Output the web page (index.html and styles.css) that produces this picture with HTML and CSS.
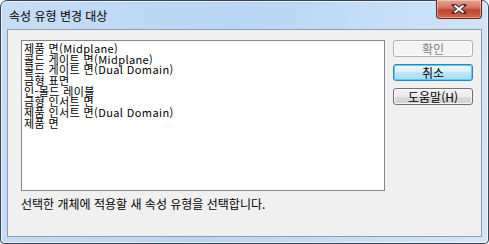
FILE: index.html
```html
<!DOCTYPE html>
<html lang="ko">
<head>
    <meta charset="UTF-8">
    <title>속성 유형 변경 대상</title>
    <link rel="stylesheet" href="styles.css">
</head>
<body>
<div class="window">
    <div class="titlebar">
        <span class="title">속성 유형 변경 대상</span>
        <button class="close-btn" type="button" aria-label="닫기">
            <svg width="16" height="10" viewBox="0 0 16 10">
                <path d="M3 1 L13 9 M13 1 L3 9" stroke="#4a2a2a" stroke-width="4" stroke-linecap="square"/>
                <path d="M3.5 1.5 L12.5 8.5 M12.5 1.5 L3.5 8.5" stroke="#ffffff" stroke-width="2"/>
            </svg>
        </button>
    </div>

    <div class="client">
        <!-- 속성 유형 목록 -->
        <ul class="type-list">
            <li>제품 면(Midplane)</li>
            <li>콜드 게이트 면(Midplane)</li>
            <li>콜드 게이트 면(Dual Domain)</li>
            <li>금형 표면</li>
            <li>인-몰드 레이블</li>
            <li>금형 인서트 면</li>
            <li>제품 인서트 면(Dual Domain)</li>
            <li>제품 면</li>
        </ul>

        <div class="actions">
            <button type="button" class="btn" disabled>확인</button>
            <button type="button" class="btn btn-default">취소</button>
            <button type="button" class="btn">도움말(H)</button>
        </div>

        <p class="hint">선택한 개체에 적용할 새 속성 유형을 선택합니다.</p>
    </div>
</div>
</body>
</html>
```

FILE: styles.css
```css
/* Windows 7 대화상자 스타일 */
:root {
    --face: #f0f0f0;
    --ui-font: "Noto Sans CJK KR", "Liberation Sans", sans-serif;
}

body {
    margin: 0;
    background: #ffffff;
    font-family: var(--ui-font);
}

.window {
    width: 489px;
    height: 244px;
    box-sizing: border-box;
    border: 1px solid #3a4656;
    border-radius: 7px 7px 4px 4px;
    background: linear-gradient(100deg, #c7def4 0%, #b8d5f3 45%, #d4e6f9 100%);
    box-shadow: inset 0 0 0 1px rgba(255, 255, 255, 0.6);
    padding: 0 6px 6px;
    display: flex;
    flex-direction: column;
}

.titlebar {
    height: 28px;
    display: flex;
    align-items: flex-start;
    justify-content: space-between;
}

.title {
    margin: 8px 0 0 2px;
    font-size: 12px;
    line-height: 14px;
    color: #000000;
}

.close-btn {
    width: 46px;
    height: 19px;
    margin: -1px 0 0 0;
    padding: 0;
    border: 1px solid #5a2b25;
    border-top: none;
    border-radius: 0 0 4px 4px;
    background: linear-gradient(#e8a493 0%, #d4705c 45%, #c0432b 55%, #d06a4f 100%);
    box-shadow: inset 0 0 0 1px rgba(255, 220, 210, 0.5);
    display: flex;
    justify-content: center;
    align-items: center;
}

.client {
    flex: 1;
    background: var(--face);
    border: 1px solid #8c9bae;
    display: grid;
    grid-template-columns: 364px 80px;
    grid-template-rows: 151px auto;
    column-gap: 8px;
    align-content: start;
    padding: 10px 8px 0 13px;
}

.type-list {
    margin: 0;
    padding: 2px 2px 0;
    list-style: none;
    background: #ffffff;
    border: 1px solid #828790;
    font-size: 11px;
    line-height: 10.7px;
    letter-spacing: 0.4px;
    color: #000000;
    overflow: hidden;
}

.type-list li {
    height: 10.7px;
    white-space: nowrap;
}

.actions {
    display: flex;
    flex-direction: column;
    gap: 7px;
}

.btn {
    height: 17px;
    padding: 0;
    border: 1px solid #707070;
    border-radius: 3px;
    background: linear-gradient(#f2f2f2 0%, #ebebeb 50%, #dddddd 50%, #cfcfcf 100%);
    box-shadow: inset 0 0 0 1px rgba(255, 255, 255, 0.8);
    font-family: var(--ui-font);
    font-size: 12px;
    line-height: 14px;
    color: #000000;
}

.btn:disabled {
    border-color: #adb2b5;
    background: #f4f4f4;
    color: #838383;
}

.btn-default {
    border-color: #3c7fb1;
    background: linear-gradient(#eaf6fd 0%, #d9f0fc 50%, #bee6fd 50%, #a7d9f5 100%);
    box-shadow: inset 0 0 0 1px #48d4fd;
}

.hint {
    grid-column: 1 / -1;
    margin: 6px 0 0;
    font-size: 12px;
    line-height: 14px;
    color: #000000;
}
```
